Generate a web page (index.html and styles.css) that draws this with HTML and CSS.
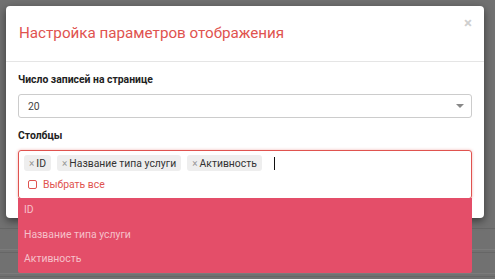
FILE: index.html
```html
<!DOCTYPE html>
<html lang="ru">
<head>
  <meta charset="UTF-8" />
  <meta name="viewport" content="width=device-width, initial-scale=1.0" />
  <title>Настройка параметров отображения</title>
  <link rel="stylesheet" href="styles.css">
</head>
<body>
  <!-- Table behind the overlay -->
  <div class="backdrop">
    <div class="bg-row"></div>
    <div class="bg-row"></div>
    <div class="bg-row"></div>
  </div>

  <!-- Settings dialog -->
  <div class="modal">
    <div class="modal-header">
      <h4 class="modal-title">Настройка параметров отображения</h4>
      <span class="close">&times;</span>
    </div>
    <div class="modal-body">
      <div class="form-group">
        <label class="field-label">Число записей на странице</label>
        <div class="select-box">
          <span>20</span>
          <span class="caret"></span>
        </div>
      </div>
      <div class="form-group">
        <label class="field-label">Столбцы</label>
        <div class="multi">
          <div class="tags">
            <span class="tag"><span class="tag-x">&times;</span>ID</span>
            <span class="tag"><span class="tag-x">&times;</span>Название типа услуги</span>
            <span class="tag"><span class="tag-x">&times;</span>Активность</span>
            <span class="cursor"></span>
          </div>
          <div class="select-all">
            <span class="check"></span>Выбрать все
          </div>
          <ul class="dropdown">
            <li>ID</li>
            <li>Название типа услуги</li>
            <li>Активность</li>
          </ul>
        </div>
      </div>
    </div>
  </div>
</body>
</html>
```

FILE: styles.css
```css
/* Page & overlay */
body {
  margin: 0;
  font-family: Roboto, "Noto Sans", sans-serif;
  background: #717171;
  height: 279px;
  overflow: hidden;
  position: relative;
}

.backdrop {
  position: absolute;
  left: 0;
  right: 0;
  top: 228px;
  bottom: 0;
  overflow: hidden;
}

.bg-row {
  height: 20px;
  border-top: 1px solid #666;
  border-bottom: 1px solid #7b7b7b;
  margin-bottom: 2px;
}

/* Dialog */
.modal {
  position: relative;
  margin: 6px 0 0 6px;
  width: 478px;
  background: #fff;
  border-radius: 4px;
  box-shadow: 0 3px 9px rgba(0, 0, 0, 0.5);
}

.modal-header {
  position: relative;
  padding: 15px 13px;
  border-bottom: 1px solid #e5e5e5;
}

.modal-title {
  margin: 0;
  font-size: 15.2px;
  font-weight: 400;
  line-height: 25px;
  color: #e0534f;
}

.close {
  position: absolute;
  top: 8px;
  right: 12px;
  font-size: 15px;
  font-weight: 700;
  color: #cfcfcf;
}

.modal-body {
  padding: 11px 12px 19px;
}

.form-group {
  margin-bottom: 11px;
}

.form-group:last-child {
  margin-bottom: 0;
}

.field-label {
  display: block;
  font-size: 10.4px;
  font-weight: 700;
  line-height: 14px;
  color: #222;
  margin-bottom: 7px;
}

/* Simple select */
.select-box {
  display: flex;
  align-items: center;
  justify-content: space-between;
  height: 22px;
  padding: 0 7px 0 9px;
  border: 1px solid #ccc;
  border-radius: 3px;
  font-size: 10.4px;
  color: #444;
}

.caret {
  width: 0;
  height: 0;
  border-left: 4px solid transparent;
  border-right: 4px solid transparent;
  border-top: 4px solid #888;
}

/* Multi select */
.multi {
  position: relative;
  border: 1px solid #e0534f;
  border-radius: 3px;
  box-shadow: 0 0 3px rgba(224, 83, 79, 0.45);
  height: 47px;
}

.tags {
  display: flex;
  align-items: center;
  gap: 6px;
  padding: 4px 5px 0;
}

.tag {
  display: inline-flex;
  align-items: center;
  height: 16px;
  padding: 0 5px;
  background: #eeeeee;
  border-radius: 3px;
  font-size: 10.4px;
  color: #333;
}

.tag-x {
  color: #999;
  font-size: 10px;
  margin-right: 2px;
}

.cursor {
  width: 1px;
  height: 13px;
  background: #111;
  margin-left: 6px;
}

.select-all {
  display: flex;
  align-items: center;
  padding: 7px 9px 0;
  font-size: 10.4px;
  color: #e0534f;
}

.check {
  width: 7px;
  height: 7px;
  border: 1.5px solid #e0534f;
  border-radius: 2px;
  margin-right: 6px;
}

.dropdown {
  position: absolute;
  left: -1px;
  right: -1px;
  top: 47px;
  margin: 0;
  padding: 0 0 1px;
  list-style: none;
  background: #e44e69;
  border-radius: 0 0 2px 2px;
}

.dropdown li {
  height: 24.5px;
  line-height: 24px;
  padding: 0 6px;
  font-size: 10.4px;
  color: #f6c0ca;
}
```
